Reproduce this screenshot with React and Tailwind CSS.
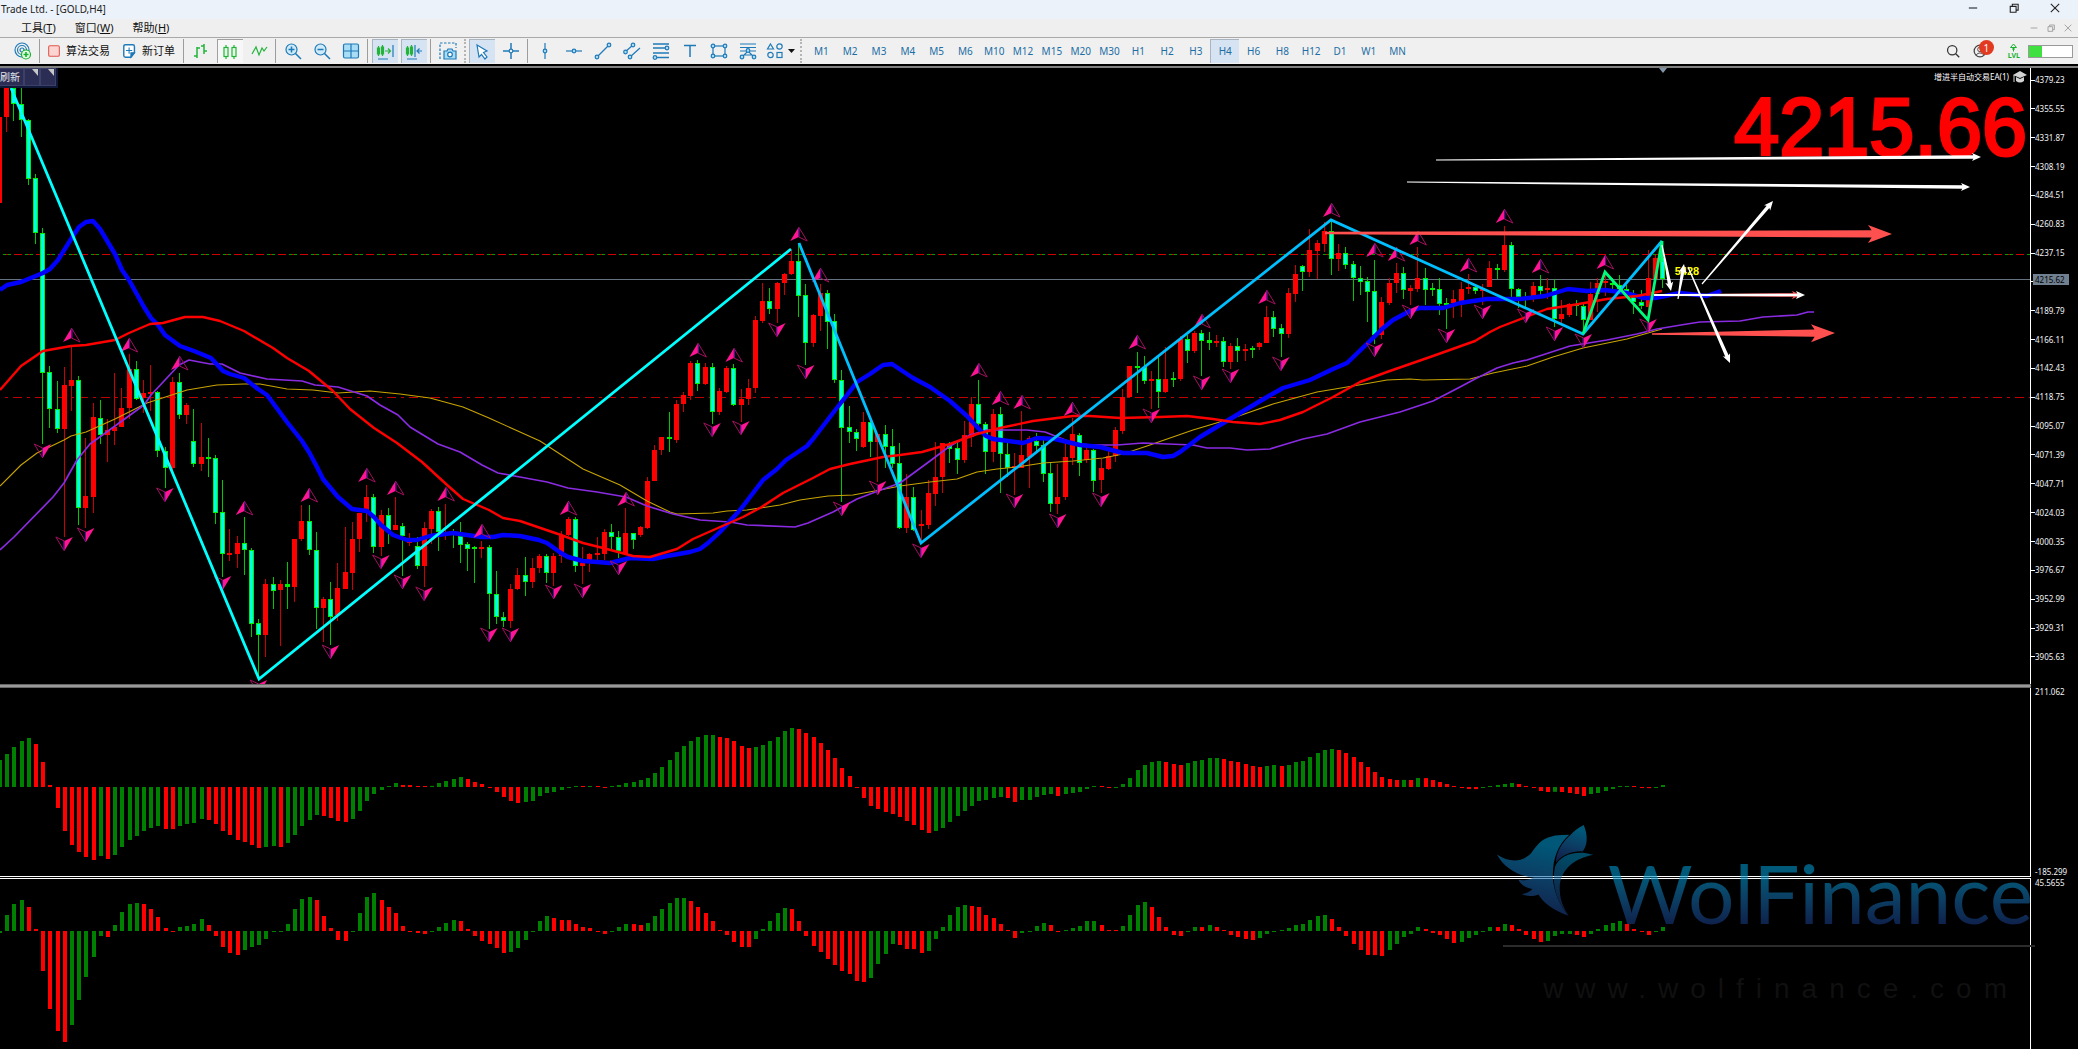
import React from "react";

const STEP = 7.2;
const FIRST_X = 6.7;
const barX = (i) => FIRST_X + STEP * i;

// One candle per entry: direction, high, body top, body bottom, low.
const CANDLES = `
r 117 117 203 203|r 88 88 117 132|g 88 88 104 121|g 88 104 120 137|g 119 120 179 185|g 174 178 233 244|g 228 233 373 444|g 366 372 409 428|g 381 409 429 433|r 367 385 429 537|r 346 380 386 411|g 376 380 508 525|r 438 496 508 528|r 403 417 497 513|g 400 418 435 444|r 419 430 435 462|r 373 427 431 445|r 388 408 427 427|r 354 369 408 419|g 361 369 399 400|r 380 393 398 413
r 365 392 394 411|g 391 392 451 457|g 447 451 468 488|r 377 382 468 470|g 373 382 415 419|r 403 405 415 424|g 409 441 464 467|r 423 457 464 471|g 438 457 459 477|g 455 458 513 524|g 480 512 554 577|r 529 553 555 561|r 536 543 554 568|g 517 543 550 575|g 548 550 624 637|g 619 623 635 680|r 579 584 635 657|g 577 584 591 609|r 580 584 590 646|g 562 584 587 609|r 539 539 587 602
r 505 521 539 541|g 505 521 550 555|g 532 550 608 629|r 597 599 608 642|g 582 599 617 645|r 563 588 615 621|r 527 572 589 589|r 522 539 573 590|r 513 513 539 552|r 485 497 512 522|g 494 497 547 553|r 510 515 547 556|g 508 515 530 544|r 497 525 530 530|g 523 526 536 576|r 533 541 543 546|g 537 546 566 569|r 522 528 566 587|r 509 511 529 544|g 507 511 532 551|r 504 532 534 540
g 529 532 534 548|g 522 536 545 563|g 542 544 549 571|g 546 547 549 583|r 541 547 549 558|g 545 547 594 629|g 571 594 617 624|g 612 617 621 627|r 584 589 621 628|r 568 575 589 590|g 557 575 582 596|r 558 568 582 588|r 554 556 568 573|g 554 556 573 583|r 553 556 573 586|r 531 535 556 563|r 517 519 535 536|g 517 519 566 572|r 547 563 566 584|r 553 554 563 572
r 537 553 555 560|r 529 532 554 560|g 524 532 537 549|g 531 537 551 558|r 508 533 554 555|g 533 533 540 549|r 526 527 535 537|r 477 481 528 529|r 445 450 481 481|r 437 437 450 455|g 412 437 439 452|r 400 404 440 443|r 392 395 404 412|r 361 363 396 400|g 360 363 384 391|r 363 367 384 385|g 363 367 412 424|r 388 391 412 415|r 366 368 392 393|g 364 368 405 406|r 389 399 405 422
r 379 388 399 405|r 316 320 388 393|r 283 301 321 323|g 288 301 309 314|r 282 283 309 323|r 273 274 283 295|r 250 261 274 275|g 243 261 296 317|g 284 295 343 365|r 314 315 343 347|r 284 293 316 331|g 290 293 322 349|g 314 321 380 383|g 370 380 428 502|g 406 427 432 443|g 429 432 439 451|r 412 422 447 448|g 420 422 442 457|r 433 434 442 482|g 425 434 447 468|g 429 446 464 468
g 443 463 528 529|r 474 497 528 533|g 487 497 530 531|r 510 524 526 543|r 480 493 525 529|r 442 477 494 506|r 443 443 477 493|g 442 445 449 463|g 442 448 460 474|r 421 435 460 463|r 397 404 437 447|g 380 404 424 430|g 422 424 452 474|r 409 414 452 462|g 407 414 454 493|g 443 454 468 477|r 453 466 468 495|r 411 455 468 468|r 436 438 457 488|g 433 441 446 453|g 440 445 474 482
g 462 473 504 512|r 464 497 504 514|r 442 457 497 500|r 418 434 458 465|g 433 435 463 476|r 447 450 460 463|g 449 450 481 492|r 459 468 480 493|r 451 456 469 470|r 427 430 456 462|r 389 397 431 434|r 366 366 397 398|g 352 366 368 393|g 356 367 381 384|r 371 379 381 409|g 356 379 392 408|r 347 379 392 393|g 372 378 380 387|r 336 339 379 381|g 335 339 351 363|r 331 333 351 353
g 330 333 341 376|g 332 340 343 350|r 335 341 343 347|g 337 341 362 367|r 343 346 362 369|g 338 346 351 362|r 344 349 351 361|g 346 348 350 358|r 342 343 347 350|r 306 317 343 343|g 311 317 329 337|g 324 328 334 357|r 288 293 334 338|r 265 274 294 302|g 265 266 272 291|r 229 250 272 277|r 240 243 251 279|r 222 231 244 252|g 220 231 259 275|r 244 253 259 271|g 247 253 265 269
g 261 264 278 301|g 266 278 282 295|g 277 281 292 322|g 260 291 335 344|r 297 302 335 339|r 278 283 303 305|r 263 273 283 293|g 267 273 290 299|r 285 288 291 305|r 247 278 289 292|g 268 278 290 305|g 283 288 290 296|g 278 289 304 315|g 298 303 305 329|r 290 299 303 318|r 282 289 301 317|r 274 287 289 294|g 285 287 291 294|r 284 288 291 305|r 261 268 287 287|g 264 268 270 279
r 226 245 270 272|g 242 245 289 299|g 288 289 297 308|g 292 297 299 308|r 282 286 296 302|g 275 286 291 295|r 278 288 290 299|g 279 288 319 327|r 300 314 319 325|r 303 304 315 317|g 300 304 306 316|g 303 306 320 333|r 282 294 320 320|r 278 283 294 312|r 272 281 283 296|g 278 283 285 290|g 275 285 289 289|g 285 289 294 298|g 290 297 302 314|g 290 302 306 309|r 250 278 307 318|r 255 258 279 279|g 242 258 279 288`
  .trim()
  .split(/[|\n]/)
  .map((row, n) => {
    const [dir, ...v] = row.split(" ");
    const [high, top, bottom, low] = v.map(Number);
    return { x: Math.floor(barX(n - 1)), up: dir === "r", high, top, bottom, low };
  });

const AVERAGES = [
  {
    color: "#c8a400",
    width: 1.1,
    points:
      "0,486 21,465 37,453 64,440 71,436 86,432 115,419 147,403 187,390 217,385 244,384 260,384 287,389 313,390 338,393 370,391 400,394 430,398 463,407 489,418 520,432 540,441 583,469 620,485 647,501 670,512 677,514 713,513 727,511 747,510 780,505 800,500 828,496 853,495 880,490 900,486 930,482 957,479 977,472 997,469 1017,467 1043,463 1073,461 1103,458 1123,454 1147,446 1193,430 1233,418 1273,404 1317,392 1353,386 1387,380 1410,379 1423,380 1470,379 1493,373 1527,366 1553,357 1583,348 1627,339 1662,329",
  },
  {
    color: "#8a2be2",
    width: 1.7,
    points:
      "0,550 14,537 53,497 64,483 77,460 90,444 115,426 144,405 151,395 179,365 189,360 210,364 222,364 240,373 267,379 302,381 315,385 338,387 367,396 380,405 398,415 410,427 438,444 460,452 482,465 498,473 520,477 547,482 568,488 597,492 626,497 647,506 673,514 700,520 730,522 747,525 795,527 808,523 833,512 857,499 878,491 900,483 930,461 950,446 970,435 987,430 1027,430 1045,432 1073,443 1090,445 1117,445 1143,443 1193,445 1207,448 1230,448 1247,450 1270,449 1283,445 1303,439 1327,434 1360,422 1400,412 1433,401 1460,387 1475,379 1497,368 1513,363 1527,360 1570,346 1607,340 1637,334 1657,329 1687,324 1700,322 1740,321 1763,317 1797,315 1808,312 1814,312",
  },
  {
    color: "#0000ff",
    width: 4.4,
    points:
      "0,290 7,285 21,282 43,273 50,269 58,260 73,236 79,227 86,222 93,221 100,229 115,254 122,270 129,280 144,307 151,318 158,325 165,335 180,346 194,351 211,358 223,371 230,374 244,378 258,389 267,395 273,403 287,422 302,441 309,452 317,467 323,479 338,497 352,509 367,511 374,517 381,525 393,535 407,540 417,540 430,536 453,533 467,535 482,537 493,537 503,535 520,536 539,540 547,543 561,553 568,557 583,561 597,562 610,563 630,558 653,559 667,556 690,552 700,549 708,543 720,532 740,510 763,480 777,469 786,460 807,446 813,439 833,413 847,395 857,382 870,374 883,365 892,364 913,378 930,387 950,401 967,416 979,429 986,436 993,439 1023,443 1037,438 1055,439 1080,445 1100,447 1123,453 1147,453 1163,457 1173,456 1180,452 1200,437 1230,419 1267,397 1283,388 1310,380 1333,369 1347,363 1370,341 1382,329 1393,320 1410,311 1420,308 1443,308 1460,303 1473,301 1487,299 1520,299 1545,296 1568,289 1587,291 1605,290 1627,293 1643,298 1655,298 1680,293 1707,296 1721,291",
  },
  {
    color: "#ff0000",
    width: 2.4,
    points:
      "0,390 21,366 43,351 71,346 86,345 115,340 129,333 150,324 163,323 185,317 203,317 220,321 244,331 273,348 287,358 309,371 333,391 350,409 374,428 397,443 422,462 446,484 463,499 482,507 489,510 503,518 520,521 561,535 583,543 603,548 633,556 650,557 677,549 693,539 727,524 743,517 760,508 783,493 813,478 830,469 850,464 883,457 900,455 922,452 950,444 977,434 1000,428 1033,421 1073,416 1090,416 1120,418 1160,417 1187,416 1213,419 1233,422 1260,424 1280,420 1303,412 1333,397 1360,382 1387,372 1433,356 1475,341 1490,332 1500,327 1547,309 1573,305 1607,299 1637,296 1662,291",
  },
];

const ZIGZAGS = [
  { color: "#00ffff", points: "11,88 259,679 791,249" },
  { color: "#00bfff", points: "799,243 921,543 1331,220 1583,334 1662,241" },
  { color: "#00fa7a", points: "1583,334 1605,272 1648,320 1662,241 1662,262" },
];

// Fractal markers as [bar index, y of the tip].
const PEAKS = [
  [9, 328], [17, 338], [24, 356], [33, 501], [42, 488], [50, 468], [54, 481], [61, 487], [66, 524],
  [78, 501], [86, 492], [96, 343], [101, 348], [110, 227], [113, 268], [135, 363], [138, 391],
  [141, 395], [148, 402], [157, 335], [166, 314], [175, 290], [184, 203], [190, 243], [193, 247],
  [196, 231], [203, 258], [208, 209], [213, 259], [222, 255],
];
const TROUGHS = [
  [5, 458], [8, 551], [11, 542], [22, 502], [30, 590], [35, 694], [45, 659], [52, 569], [55, 589],
  [58, 601], [67, 642], [70, 642], [76, 599], [80, 598], [85, 575], [98, 437], [102, 435], [107, 337],
  [111, 379], [116, 516], [121, 495], [127, 558], [140, 508], [146, 528], [152, 507], [159, 423],
  [166, 390], [170, 383], [177, 371], [190, 357], [195, 319], [200, 343], [205, 319], [211, 323],
  [215, 341], [219, 348], [228, 333],
];

const MACD = [
  27, 33, 40, 46, 49, 43, 25, 2, -21, -44, -58, -65, -70, -73, -69, -72, -68, -60, -53, -49, -44, -41, -39,
  -42, -42.1, -39, -37, -36, -32, -33, -37, -44, -48, -53, -55, -58, -61, -60, -59, -60, -56, -48, -39, -33,
  -28, -29, -31, -34, -35, -32, -24, -14, -7, -3, 1, 4, 2, 1.9, 1, 1, 1.1, 4, 6, 8, 10, 8, 5, 3, -1, -5,
  -10, -14, -16, -15, -14, -9, -6, -5, -3, -1, 1, 0.9, 1, 0.9, -1, 1, 2, 4, 5, 7, 9, 14, 20, 27, 35, 41, 46,
  50, 52, 52, 50, 49, 46, 41, 39, 40, 42, 46, 50, 56, 59, 58, 54, 50, 44, 37, 29, 19, 11, -1, -11, -19, -22,
  -25, -27, -30, -34, -38, -43, -46, -44, -41, -35, -29, -24, -19, -14, -13, -11, -10, -11, -15, -13, -13,
  -10, -8, -7, -9, -7, -6, -5, -2, 1, 0.9, -1, -0.9, 3, 9, 17, 22, 25, 26, 25, 23, 22, 24, 26, 27, 29, 29,
  28, 26, 25, 23, 21, 20, 21, 22, 21, 22, 25, 26, 30, 34, 37, 38, 37, 34, 30, 25, 20, 15, 10, 8, 7, 7.1, 7,
  9, 8.9, 7, 5, 3, 1, -1, -2, -2.1, -1, 1, 2, 3, 4, 3, 1, -1, -4, -5, -4.8, -5, -6, -7, -9, -7, -6, -4, -2,
  1, 1, 0.9, -1, -1.1, -1, 2,
];
const OSCILLATOR = [
  -2, 16, 27, 31, 24, 2, -40, -78, -100, -111, -94, -69, -46, -26, -5, -6, 6, 19, 27, 28, 27, 22, 14, 3, -1,
  4, 5, 7, 12, 6, -5, -16, -22, -24, -19, -16, -14, -8, -1, -1, 7, 22, 32, 34, 31, 15, 3, -9, -10, -1, 18,
  34, 38, 31, 24, 18, 5, -1, -2, -3, -1, 4, 8, 11, 10, 2, -5, -10, -13, -17, -22, -21, -17, -9, -1, 10, 15,
  13, 11, 10.9, 7, 4, 3, -1, -3, -1, 4, 7, 6.9, 6, 8, 15, 22, 28, 33, 33, 30, 24, 18, 10, 1, -4, -11, -16,
  -16.1, -8, 2, 10, 18, 23, 22, 10, -5, -15, -21, -28, -34, -40, -43, -50, -51, -47, -33, -23, -13, -14,
  -18, -18.1, -22, -20, -8, 4, 16, 24, 26, 25, 24, 16, 13, 7, 1, -7, -2, -1, 5, 8, 6, -1, 1, 3, 5, 10, 10,
  6, 1, 0.9, 5, 16, 26, 29, 24, 14, 4, -4, -5, -1, 4, 3.9, 6, 4, 1, -4, -6, -8, -9, -7, -3, -1, 1, 3, 6, 7,
  11, 15, 16, 12, 4, -5, -13, -19, -24, -24.1, -25, -19, -13, -6, -3, 4, 2, -2, -4, -8, -12, -11, -7, -4,
  -1, 4, 3.9, 7, 6, 2, -4, -8, -11, -10, -5, -3, -3, -4, -6, -3, 2, 6, 8, 10, 7, 2, -1, -4, -1, 4,
];

const PRICE_TICKS = [
  "4379.23", "4355.55", "4331.87", "4308.19", "4284.51", "4260.83", "4237.15", "4213.47", "4189.79",
  "4166.11", "4142.43", "4118.75", "4095.07", "4071.39", "4047.71", "4024.03", "4000.35", "3976.67",
  "3952.99", "3929.31", "3905.63",
];

const TIMEFRAMES = [
  "M1", "M2", "M3", "M4", "M5", "M6", "M10", "M12", "M15", "M20", "M30", "H1", "H2", "H3", "H4", "H6",
  "H8", "H12", "D1", "W1", "MN",
];

function Candle({ x, up, high, top, bottom, low }) {
  const h = Math.max(bottom - top, 2);
  return (
    <g shapeRendering="crispEdges">
      <rect x={x} y={high} width="1" height={low - high} fill={up ? "#cc0000" : "#00c800"} />
      <rect x={x - 2} y={top} width="5" height={h} fill={up ? "#ff0000" : "#00f000"} />
      {!up && h > 3 && <rect x={x - 1} y={top + 1} width="3" height={h - 2} fill="#00ffe8" />}
    </g>
  );
}

function Fractal({ x, y, down }) {
  return (
    <g transform={`translate(${x} ${y})${down ? " rotate(180)" : ""}`}>
      <path d="M0 0 L8.5 14 L0 10" fill="none" stroke="#a3105f" strokeWidth="1" />
      <path d="M0 0 L-8.5 14 L0 10 Z" fill="#ff1493" />
      <path d="M0.5 1 V10" stroke="#5a16a0" strokeWidth="1" />
    </g>
  );
}

// Tapered arrow whose shaft widens from tail to head.
function Arrow({ from, to, tail, shaft, head, length, color }) {
  const [x1, y1] = from;
  const [x2, y2] = to;
  const d = Math.hypot(x2 - x1, y2 - y1);
  const deg = (Math.atan2(y2 - y1, x2 - x1) * 180) / Math.PI;
  const b = d - length;
  return (
    <polygon
      transform={`translate(${x1} ${y1}) rotate(${deg})`}
      fill={color}
      points={`0,${-tail} ${b + length * 0.15},${-shaft} ${b},${-head} ${d},0 ${b},${head} ${b + length * 0.15},${shaft} 0,${tail}`}
    />
  );
}

function Histogram({ values, baseline, viewBox }) {
  let rising = true;
  const bars = values.map((v, n) => {
    if (n > 0 && v !== values[n - 1]) rising = v > values[n - 1];
    return { v, rising };
  });
  return (
    <svg className="block h-full w-full" viewBox={viewBox} preserveAspectRatio="none" aria-hidden="true">
      {bars.map((b, n) => {
        const h = Math.max(1, Math.abs(b.v));
        return (
          <rect
            key={n}
            x={Math.floor(barX(n - 1)) - 1}
            y={b.v > 0 ? baseline - h : baseline}
            width="4"
            height={h}
            fill={b.rising ? "#008000" : "#ff0000"}
          />
        );
      })}
    </svg>
  );
}

const WHITE = { tail: 0.6, shaft: 1.8, head: 4, length: 9, color: "#ffffff" };

function PricePlot() {
  return (
    <div className="relative min-h-0 min-w-0 flex-1 overflow-hidden">
      <svg className="absolute inset-0 h-full w-full" viewBox="0 68 2030 616" preserveAspectRatio="none" aria-hidden="true">
        <path d="M0 279.5 H2030" stroke="#65727f" strokeWidth="1" />
        <path d="M3 254.5 H2030" stroke="#00a000" strokeWidth="1" strokeDasharray="8 14" />
        <path d="M14 254.5 H2030" stroke="#d00000" strokeWidth="1" strokeDasharray="8 14" />
        <path d="M6 254.5 H2030" stroke="#d00000" strokeWidth="1" strokeDasharray="2 20" />
        <path d="M5 397.5 H2030" stroke="#c00000" strokeWidth="1" strokeDasharray="3 5 9 5" />
        {CANDLES.map((c) => (
          <Candle key={c.x} {...c} />
        ))}
        {AVERAGES.map((a) => (
          <polyline key={a.color} points={a.points} fill="none" stroke={a.color} strokeWidth={a.width} strokeLinejoin="round" />
        ))}
        {PEAKS.map(([i, y]) => (
          <Fractal key={`p${i}`} x={barX(i)} y={y} />
        ))}
        {TROUGHS.map(([i, y]) => (
          <Fractal key={`t${i}`} x={barX(i)} y={y} down />
        ))}
        {ZIGZAGS.map((z) => (
          <polyline key={z.color} points={z.points} fill="none" stroke={z.color} strokeWidth="2.8" />
        ))}
        <path d="M1659 68 H1667 L1663 73 Z" fill="#8494a8" />
      </svg>

      <div className="absolute left-0 top-0 flex h-[20px] w-[58px] bg-[#101838] text-[10px] text-gray-200">
        <button className="flex h-[18px] w-[24px] items-center justify-end border border-l-0 border-[#3a4068] bg-[#2b2d55] pr-[3px] whitespace-nowrap">
          刷新
        </button>
        {["left", "right"].map((name) => (
          <button key={name} aria-label={name} className="flex h-[18px] w-[16px] justify-end border border-[#3a4068] bg-[#2b2d55]">
            <svg width="7" height="7" viewBox="0 0 7 7">
              <path d="M0 0 H6 V7 Z" fill="#c8c8c8" />
            </svg>
          </button>
        ))}
      </div>

      <div className="absolute right-[3px] top-[2px] flex items-center gap-1 text-[8px] leading-[14px] text-white">
        <span>增进半自动交易EA(1)</span>
        <svg width="14" height="12" viewBox="0 0 14 12" fill="#d4d4d4">
          <path d="M0 4 L7 0 L14 4 L7 7 Z" />
          <path d="M3 6 L7 8 L11 6 V10 Q7 13 3 10 Z" />
          <path d="M1 4 V11" stroke="#d4d4d4" />
        </svg>
      </div>
      <div className="absolute right-[3px] top-[21px] text-[81px] leading-[76px] text-[#ff0000] [-webkit-text-stroke:3px_#ff0000] font-['Liberation_Sans',sans-serif]">
        4215.66
      </div>
      <div className="absolute left-[82.5%] top-[195px] text-[11px] font-bold leading-4 text-[#ffff00] font-['Liberation_Sans',sans-serif]">
        5428
      </div>

      <svg className="absolute inset-0 h-full w-full" viewBox="0 68 2030 616" preserveAspectRatio="none" aria-hidden="true">
        <Arrow from={[1325, 233]} to={[1892, 234]} tail={1.2} shaft={3.6} head={9} length={24} color="#ff5050" />
        <Arrow from={[1652, 334]} to={[1835, 333]} tail={0.8} shaft={3.6} head={9} length={24} color="#ff5050" />
        <Arrow from={[1654, 295]} to={[1801, 295]} {...WHITE} color="#ff5050" />
        <Arrow from={[1654, 295]} to={[1805, 295]} {...WHITE} tail={1} shaft={1.2} />
        <Arrow from={[1436, 160]} to={[1981, 157]} {...WHITE} />
        <Arrow from={[1407, 182]} to={[1970, 187]} {...WHITE} />
        <Arrow from={[1702, 284]} to={[1773, 201]} {...WHITE} />
        <Arrow from={[1662, 245]} to={[1671, 291]} {...WHITE} />
        <Arrow from={[1678, 299]} to={[1684, 264]} {...WHITE} />
        <Arrow from={[1688, 267]} to={[1730, 363]} {...WHITE} />
      </svg>
    </div>
  );
}

function Axis({ children }) {
  return <div className="relative w-12 shrink-0 border-l border-white text-[8px] leading-[8px] text-gray-100">{children}</div>;
}

function Watermark() {
  return (
    <div className="pointer-events-none absolute bottom-[44px] right-[43px] flex w-[532px] flex-col">
      <div className="flex h-[92px] items-end justify-between opacity-60">
        <svg className="-ml-[6px] h-[92px] w-[97px]" viewBox="45 30 255 275" preserveAspectRatio="none" aria-hidden="true">
          <defs>
            <linearGradient id="bird" x1="0.6" y1="0" x2="0.4" y2="1">
              <stop offset="0.1" stopColor="#0092c8" />
              <stop offset="0.55" stopColor="#1664a4" />
              <stop offset="1" stopColor="#1c3478" />
            </linearGradient>
          </defs>
          <g fill="url(#bird)">
            <path d="M45 118 C75 142 112 143 135 114 C152 88 165 62 215 60 L235 59 C205 90 190 130 192 190 C194 230 212 275 233 301 C190 285 165 260 154 238 C138 245 122 243 110 237 C122 234 130 230 138 221 C120 219 108 208 101 194 C115 197 127 195 142 187 C100 182 65 160 45 118 Z" />
            <path d="M273 30 C284 60 284 90 270 109 C245 107 218 118 200 142 C200 112 215 84 238 60 C248 47 260 37 273 30 Z" />
            <path d="M298 119 C250 130 215 160 210 210 C208 250 220 280 235 302 C196 255 188 190 199 150 C212 122 250 102 298 119 Z" opacity="0.85" />
          </g>
        </svg>
        <div className="mr-[2px] bg-gradient-to-b from-[#0094c8] from-30% to-[#183a80] to-90% bg-clip-text text-[82px] leading-[80px] text-transparent font-['Lato',sans-serif] -mb-[15px]">
          WolFinance
        </div>
      </div>
      <div className="mt-[28px] h-[2px] bg-[#2c2c2c]" />
      <div className="mt-[26px] pr-[16px] text-right text-[28px] leading-8 tracking-[12px] text-[#101010] font-['Liberation_Sans',sans-serif]">
        www.wolfinance.com
      </div>
    </div>
  );
}

/* ---------- toolbar ---------- */

function Glyph({ children, size = 18, color = "#1f7ab8" }) {
  return (
    <svg width={size} height={size} viewBox="0 0 18 18" fill="none" stroke={color} strokeWidth="1.2" aria-hidden="true">
      {children}
    </svg>
  );
}

function Tool({ label, active, pressed, children }) {
  const look = active
    ? "border-l border-t border-[#a8b4c0] bg-[#d5e3f2]"
    : pressed
      ? "border-l border-t border-[#a0a0a0] bg-[#f7f7f7]"
      : "";
  return (
    <div className="flex h-full w-[29px] shrink-0 justify-center">
      <button aria-label={label} className={`flex h-6 w-[26px] items-center justify-center ${look}`}>
        {children}
      </button>
    </div>
  );
}

const Sep = () => (
  <div className="flex h-full w-[5px] shrink-0 justify-center">
    <div className="w-px bg-[#9c9c9c]" />
  </div>
);
const Grip = () => (
  <div className="flex h-full w-[5px] shrink-0 justify-center">
    <div className="border-l-2 border-dotted border-[#b4b4b4]" />
  </div>
);
const Dot = ({ x, y }) => <circle cx={x} cy={y} r="1.8" fill="#a9dcf5" />;

function Toolbar() {
  return (
    <div className="flex h-[26px] shrink-0 items-start overflow-hidden bg-[#f0f0f0] py-px text-[11px] text-[#111]">
      <div className="w-[8px] shrink-0" />
      <Tool label="信号">
        <Glyph>
          <circle cx="8" cy="8" r="7" />
          <circle cx="8" cy="8" r="4.5" />
          <circle cx="8" cy="8" r="2" />
          <circle cx="12" cy="12.5" r="4.5" fill="#e6ffe6" stroke="#18b030" />
          <path d="M12 10 V15 M9.500 12.500 H14.500" stroke="#18b030" strokeWidth="1.600" />
        </Glyph>
      </Tool>
      <Sep />
      <button className="ml-1 flex h-6 shrink-0 items-center gap-1">
        <Glyph size={16}>
          <rect x="3" y="3" width="12" height="12" rx="1.5" fill="#fbd5d2" stroke="#e2574c" />
        </Glyph>
        算法交易
      </button>
      <button className="ml-3 mr-[6px] flex h-6 shrink-0 items-center gap-1">
        <Glyph size={16}>
          <path d="M4 2 H12 Q14 2 14 4 V11 L10 16 H4 Q2 16 2 14 V4 Q2 2 4 2 Z" fill="#fff" strokeWidth="1.600" />
          <path d="M8 5 V12 M4.500 8.500 H11.500" />
          <path d="M14 11 H10 V16 Z" fill="#1f7ab8" />
        </Glyph>
        新订单
      </button>
      <Sep />
      <Tool label="柱状图">
        <Glyph color="#22b43a">
          <path d="M5 5 V16 M2 14 H5 M5 6 H8 M12 2 V12 M9 4 H12 M12 9 H15" strokeWidth="1.500" />
        </Glyph>
      </Tool>
      <Tool label="蜡烛图" pressed>
        <Glyph color="#22b43a">
          <path d="M5 2 V16 M13 2 V16" />
          <rect x="3" y="4.500" width="4" height="9" fill="#e8ffe8" />
          <rect x="11" y="4.500" width="4" height="9" fill="#e8ffe8" />
        </Glyph>
      </Tool>
      <Tool label="折线图">
        <Glyph color="#22b43a">
          <path d="M2 12 L6 5 L9 13 L12 6 L14 9 L17 5" />
        </Glyph>
      </Tool>
      <Sep />
      <Tool label="放大">
        <Glyph>
          <circle cx="7.500" cy="7.500" r="5.500" fill="#cfeaf8" />
          <path d="M11.500 11.500 L17 17 M7.500 4.500 V10.500 M4.500 7.500 H10.500" strokeWidth="1.500" />
        </Glyph>
      </Tool>
      <Tool label="缩小">
        <Glyph>
          <circle cx="7.500" cy="7.500" r="5.500" fill="#cfeaf8" />
          <path d="M11.500 11.500 L17 17 M4.500 7.500 H10.500" strokeWidth="1.500" />
        </Glyph>
      </Tool>
      <Tool label="平铺窗口">
        <Glyph>
          <rect x="1.500" y="2" width="15" height="14" rx="1.500" fill="#a9dcf5" />
          <path d="M9 2 V16 M1.500 9 H16.500" />
        </Glyph>
      </Tool>
      <Sep />
      <Tool label="自动滚动" active>
        <Glyph>
          <path d="M2.500 3 V13 M6.500 2 V13" stroke="#22b43a" />
          <path d="M1.500 5 H3.500 V11 H1.500 Z M5.500 4 H7.500 V11 H5.500 Z" stroke="#22b43a" fill="#22b43a" />
          <path d="M9 8 H14 M12 5.500 L14.500 8 L12 10.500" stroke="#22b43a" />
          <path d="M17 2 V14 M2 16 H12" />
        </Glyph>
      </Tool>
      <Tool label="图表平移" active>
        <Glyph>
          <path d="M2.500 3 V13 M6.500 2 V13" stroke="#22b43a" />
          <path d="M1.500 5 H3.500 V11 H1.500 Z M5.500 4 H7.500 V11 H5.500 Z" stroke="#22b43a" fill="#22b43a" />
          <path d="M10 2 V14 M17 8 H12.500 M14.500 5.500 L12 8 L14.500 10.500 M2 16 H12" />
        </Glyph>
      </Tool>
      <Sep />
      <Tool label="截图">
        <Glyph>
          <path d="M1 17 V1 H17 V6" strokeDasharray="2.500 1.500" />
          <path d="M5 9 H8 L9 7 H13 L14 9 H17 V17 H5 Z" fill="#a9dcf5" />
          <circle cx="11" cy="12.500" r="2.300" fill="#fff" />
        </Glyph>
      </Tool>
      <Grip />
      <Tool label="光标" active>
        <Glyph>
          <path d="M4 2 L14 8 L10.500 9.500 L14 14 L12 16 L8.500 11.500 L6 14 Z" fill="#fff" />
        </Glyph>
      </Tool>
      <Tool label="十字线">
        <Glyph>
          <path d="M9 1 V7 M9 11 V17 M1 9 H7 M11 9 H17" strokeWidth="1.500" />
          <circle cx="9" cy="9" r="1.800" />
        </Glyph>
      </Tool>
      <Sep />
      <Tool label="垂直线">
        <Glyph>
          <path d="M9 1 V17" />
          <Dot x={9} y={9} />
        </Glyph>
      </Tool>
      <Tool label="水平线">
        <Glyph>
          <path d="M1 9 H17" />
          <Dot x={9} y={9} />
        </Glyph>
      </Tool>
      <Tool label="趋势线">
        <Glyph>
          <path d="M3 15 L15 3" />
          <Dot x={3} y={15} />
          <Dot x={15} y={3} />
        </Glyph>
      </Tool>
      <Tool label="等距通道">
        <Glyph>
          <path d="M2 10 L10 3 M7 15 L17 6" />
          <Dot x={2.5} y={10} />
          <Dot x={10} y={3} />
          <Dot x={7} y={15} />
        </Glyph>
      </Tool>
      <Tool label="斐波那契">
        <Glyph>
          <path d="M1 2 H17 M1 6 H14 M1 11 H17 M3 15.500 H17" strokeWidth="1.400" />
          <Dot x={15} y={6} />
          <Dot x={3} y={15.5} />
        </Glyph>
      </Tool>
      <Tool label="文本">
        <Glyph>
          <path d="M3 3.500 H15 M9 3.500 V15" strokeWidth="1.500" />
        </Glyph>
      </Tool>
      <Tool label="矩形">
        <Glyph>
          <rect x="3" y="4" width="12" height="10" />
          <Dot x={3} y={4} />
          <Dot x={15} y={4} />
          <Dot x={3} y={14} />
          <Dot x={15} y={14} />
        </Glyph>
      </Tool>
      <Tool label="扇形线">
        <Glyph>
          <path d="M1 2 H17 M1 5.500 H17 M3 15 L9 9 L15 15 M1 9 H7 M11 9 H17 M5 13 H13" />
          <Dot x={9} y={8.5} />
          <Dot x={3} y={15} />
          <Dot x={15} y={15} />
        </Glyph>
      </Tool>
      <button aria-label="图形" className="flex h-6 w-9 shrink-0 items-center gap-1 pl-1">
        <Glyph>
          <path d="M4.500 2 L7.500 7 H1.500 Z" />
          <circle cx="13.500" cy="4.500" r="2.700" />
          <circle cx="4.500" cy="13" r="2.700" />
          <rect x="11" y="10.500" width="5" height="5" />
        </Glyph>
        <svg width="7" height="4" viewBox="0 0 7 4">
          <path d="M0 0 H7 L3.500 4 Z" fill="#111" />
        </svg>
      </button>
      <Grip />
      <div className="ml-1 grid h-6 w-[605px] shrink-0 text-[#1c6ea4] [grid-template-columns:repeat(21,minmax(0,1fr))]">
        {TIMEFRAMES.map((t) => (
          <button
            key={t}
            className={
              t === "H4"
                ? "border-l border-t border-[#a8b4c0] bg-[#d5e3f2] text-center text-[10px]"
                : "text-center text-[10px]"
            }
          >
            {t}
          </button>
        ))}
      </div>
      <div className="ml-auto flex h-6 items-center pr-[5px]">
        <button aria-label="搜索" className="mr-[13px]">
          <Glyph size={14} color="#333">
            <circle cx="8" cy="8" r="6" strokeWidth="1.600" />
            <path d="M12.500 12.500 L17 17" strokeWidth="1.800" />
          </Glyph>
        </button>
        <button aria-label="通知" className="relative mr-[21px]">
          <Glyph size={14} color="#444">
            <circle cx="9" cy="9" r="7.500" strokeWidth="1.600" />
            <circle cx="9" cy="7" r="3" />
            <path d="M4 14 Q9 9 14 14" />
          </Glyph>
          <span className="absolute -top-[4px] left-[6px] flex h-[15px] w-[15px] items-center justify-center rounded-full bg-[#e23a20] text-[10px] leading-none text-white">
            1
          </span>
        </button>
        <div className="mr-[8px] flex flex-col items-center text-[#18b030]">
          <svg width="9" height="9" viewBox="0 0 9 9" fill="none" stroke="currentColor">
            <path d="M4.500 8.500 V5 M1.500 4.500 L4.500 1 L7.500 4.500 H1.500 M3 6 H6" />
          </svg>
          <span className="text-[7px] font-bold leading-[7px]">LVL</span>
        </div>
        <div className="h-[13px] w-[45px] border border-[#9a9a9a] bg-white">
          <div className="h-full w-[30%] bg-[#3fe03f]" />
        </div>
      </div>
    </div>
  );
}

function WindowControls({ muted }) {
  const items = [
    ["最小化", <path key="a" d="M1 6 H11" />],
    ["还原", <path key="b" d="M1.500 4 H8.500 V11 H1.500 Z M4 4 V1.500 H11 V8.500 H8.500" />],
    ["关闭", <path key="c" d="M1 1 L11 11 M11 1 L1 11" />],
  ];
  return (
    <div
      className={
        muted
          ? "ml-auto flex items-center gap-[9px] pr-[6px] text-[#999]"
          : "ml-auto flex h-4 items-center gap-[31px] pr-[18px] text-[#222]"
      }
    >
      {items.map(([label, shape]) => (
        <button key={label} aria-label={label}>
          <svg
            className={muted ? "h-2 w-2" : "h-[10px] w-[10px]"}
            viewBox="0 0 12 12"
            fill="none"
            stroke="currentColor"
            strokeWidth="1.300"
          >
            {shape}
          </svg>
        </button>
      ))}
    </div>
  );
}

const MENUS = [
  ["工具", "T"],
  ["窗口", "W"],
  ["帮助", "H"],
];

export default function App() {
  return (
    <div className="flex h-screen min-h-[600px] flex-col overflow-hidden bg-black font-['Noto_Sans','Noto_Sans_CJK_SC',sans-serif]">
      <header className="flex h-[19px] shrink-0 items-start bg-[#ecf2fa] text-[10px] leading-[18px] text-[#222]">
        <h1 className="pl-px">Trade Ltd. - [GOLD,H4]</h1>
        <WindowControls />
      </header>
      <nav className="flex h-[19px] shrink-0 items-center gap-[19px] border-b border-[#a9a9a9] bg-[#efefef] pl-[21px] text-[11px] leading-[18px] text-[#111]">
        {MENUS.map(([name, key]) => (
          <button key={key}>
            {name}(<u>{key}</u>)
          </button>
        ))}
        <WindowControls muted />
      </nav>
      <Toolbar />
      <div className="mt-[2px] h-[2px] shrink-0 bg-[#808080]" />

      <main className="relative grid min-h-0 flex-1 grid-cols-1 [grid-template-rows:616fr_4px_188fr_3px_170fr]">
        <section className="flex min-h-0">
          <PricePlot />
          <Axis>
            <div className="flex h-full flex-col justify-between pb-[23px] pt-[8px]">
              {PRICE_TICKS.map((p) => (
                <div key={p} className="flex items-center">
                  <span className="h-px w-[4px] bg-white" />
                  {p}
                </div>
              ))}
            </div>
            <div className="absolute left-[2px] top-[206px] w-[36px] bg-[#708090] pl-[2px] leading-[11px] text-black">4215.62</div>
          </Axis>
        </section>
        <div className="mr-[47px] border-y border-[#666] bg-[#999]" />
        <section className="flex min-h-0">
          <div className="min-w-0 flex-1 overflow-hidden">
            <Histogram values={MACD} baseline={787} viewBox="0 688 2030 188" />
          </div>
          <Axis>
            <div className="flex h-full flex-col justify-between pl-1">
              <span>211.062</span>
              <span>-185.299</span>
            </div>
          </Axis>
        </section>
        <div className="mr-[47px] border-y border-white bg-black" />
        <section className="flex min-h-0">
          <div className="min-w-0 flex-1 overflow-hidden">
            <Histogram values={OSCILLATOR} baseline={931} viewBox="0 879 2030 170" />
          </div>
          <Axis>
            <div className="pl-1">45.5655</div>
          </Axis>
        </section>
        <Watermark />
      </main>
    </div>
  );
}
